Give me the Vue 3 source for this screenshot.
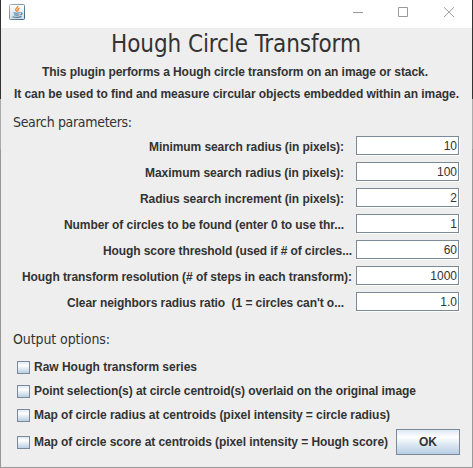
<script setup>
const fields = [
  { label: 'Minimum search radius (in pixels):', value: '10', width: 195, end: 12 },
  { label: 'Maximum search radius (in pixels):', value: '100', width: 199, end: 12 },
  { label: 'Radius search increment (in pixels):', value: '2', width: 204, end: 12 },
  { label: 'Number of circles to be found (enter 0 to use thr...', value: '1', width: 280, end: 12 },
  { label: 'Hough score threshold (used if # of circles...', value: '60', width: 249, end: 4 },
  { label: 'Hough transform resolution (# of steps in each transform):', value: '1000', width: 330, end: 4 },
  { label: "Clear neighbors radius ratio\u00a0 (1 = circles can't o...", value: '1.0', width: 277, end: 12 },
]
const options = [
  { label: 'Raw Hough transform series', width: 163 },
  { label: 'Point selection(s) at circle centroid(s) overlaid on the original image', width: 382 },
  { label: 'Map of circle radius at centroids (pixel intensity = circle radius)', width: 356 },
  { label: 'Map of circle score at centroids (pixel intensity = Hough score)', width: 354 },
]
</script>

<template>
  <main class="window">
    <header class="titlebar">
      <svg class="java" width="16" height="16" viewBox="0 0 16 16">
        <defs>
          <linearGradient id="tile" x2="0" y2="1">
            <stop stop-color="#fff" /><stop offset="1" stop-color="#cfdbe3" />
          </linearGradient>
          <linearGradient id="edge" x2="1" y2="1">
            <stop stop-color="#a9b5be" /><stop offset="1" stop-color="#34627f" />
          </linearGradient>
        </defs>
        <rect x=".5" y=".5" width="15" height="15" rx="1" fill="url(#tile)" stroke="url(#edge)" />
        <path d="M8.8 2c.5 1.5-3.1 2.500-2 4.200l1 1.500M10.500 4.200C8 5.300 9 6.200 8.800 7.500" fill="none" stroke="#ed7d22" stroke-width="1.300" />
        <path d="M4.500 8.800c2 .6 4.500.5 6.300 0M5 10.700c2 .6 4 .5 5.500.1M3.500 12.800c3 .8 6 .7 9-.2M11.500 8.800c2.300-.5 1.800 1.800-.2 2.200" fill="none" stroke="#4e7896" stroke-width="1.100" />
      </svg>
      <svg class="controls" width="104" height="12" viewBox="0 0 104 12" fill="none" stroke="#999">
        <path d="M0 6.500h10M45.500 1.500h9v9h-9zM91 1.300l10 9.700M101 1.300L91 11" />
      </svg>
    </header>
    <section class="content">
      <h1><svg class="fit" width="251" height="32"><text x="0" y="24" textLength="250">Hough Circle Transform</text></svg></h1>
      <p><svg class="fit" width="387" height="16"><text x="0" y="12" textLength="386">This plugin performs a Hough circle transform on an image or stack.</text></svg></p>
      <p class="second"><svg class="fit" width="446" height="16"><text x="0" y="12" textLength="445">It can be used to find and measure circular objects embedded within an image.</text></svg></p>
      <h2 class="search"><svg class="fit" width="120" height="20"><text x="0" y="15" textLength="119">Search parameters:</text></svg></h2>
      <div class="fields">
        <div v-for="f in fields" :key="f.label" class="field">
          <svg class="fit" :class="{ wide: f.end === 4 }" :width="f.width" height="16"><text x="0" y="12" :textLength="f.width">{{ f.label }}</text></svg>
          <div class="input">{{ f.value }}</div>
        </div>
      </div>
      <h2 class="output"><svg class="fit" width="98" height="20"><text x="0" y="15" textLength="97">Output options:</text></svg></h2>
      <div class="bottom">
        <div class="options">
          <div v-for="o in options" :key="o.label" class="option">
            <i class="box"></i>
            <svg class="fit" :width="o.width" height="16"><text x="0" y="12" :textLength="o.width">{{ o.label }}</text></svg>
          </div>
        </div>
        <button>OK</button>
      </div>
    </section>
  </main>
</template>

<style>
body { margin: 0; }
</style>

<style scoped>
.window {
  box-sizing: border-box;
  width: 473px;
  height: 468px;
  overflow: hidden;
  background: #eee;
  border: 1px solid;
  border-width: 0 1px 1px;
  border-color: #888;
  border-image: linear-gradient(#333 0 100px, #aaa 100px 150px, #999 150px) 1;
  color: #333;
  font: bold 12px/16px "Liberation Sans", Arial, sans-serif;
}
.titlebar {
  box-sizing: border-box;
  height: 28px;
  padding: 4px 15px 0 8px;
  display: flex;
  justify-content: space-between;
  background: #fff;
}
.controls { margin-top: 2px; }
.fit { display: block; overflow: visible; fill: #333; white-space: pre; flex: none; }
h1 { margin: 0; height: 36px; font: 24px "DejaVu Sans Condensed", "DejaVu Sans", sans-serif; font-stretch: condensed; }
h1 .fit { margin-left: 110px; }
p { margin: 0 0 0 41px; height: 22px; }
p.second { margin-left: 13px; }
h2 { margin: 0 0 0 12px; font: 14px "DejaVu Sans Condensed", "DejaVu Sans", sans-serif; font-stretch: condensed; }
.search { padding-top: 4px; height: 24px; }
.fields { display: grid; grid-auto-rows: 26px; }
.field { display: flex; justify-content: flex-end; padding-right: 13px; }
.field .fit { margin: 3px 12px 0 0; }
.field .fit.wide { margin-right: 4px; }
.input {
  box-sizing: border-box;
  width: 103px;
  height: 19px;
  border: 1px solid #7a8a99;
  box-shadow: inset -1px 0 #fff, 1px 1px #fff;
  background: #fff;
  padding-right: 1px;
  font-weight: normal;
  font-size: 12px;
  line-height: 19px;
  text-align: right;
}
.output { padding-top: 11px; height: 30px; }
.bottom { display: flex; padding-right: 12px; justify-content: space-between; }
.options { width: 390px; flex: none; }
.option { display: flex; height: 24px; align-items: flex-start; padding-left: 16px; }
.option:last-child { padding-top: 3px; }
.box {
  flex: none;
  box-sizing: border-box;
  width: 13px;
  height: 13px;
  margin: 2px 4px 0 0;
  border: 1px solid #7a8a99;
  background: linear-gradient(#dde8f3, #fff 30%, #b8cfe5);
}
button {
  flex: none;
  box-sizing: border-box;
  width: 64px;
  height: 26px;
  margin-top: 70px;
  padding: 0;
  border: 1px solid #7a8a99;
  background: linear-gradient(#dde8f3, #fff 30%, #dde8f3 60%, #b8cfe5);
  color: #333;
  font: bold 12px "Liberation Sans", Arial, sans-serif;
}
</style>
